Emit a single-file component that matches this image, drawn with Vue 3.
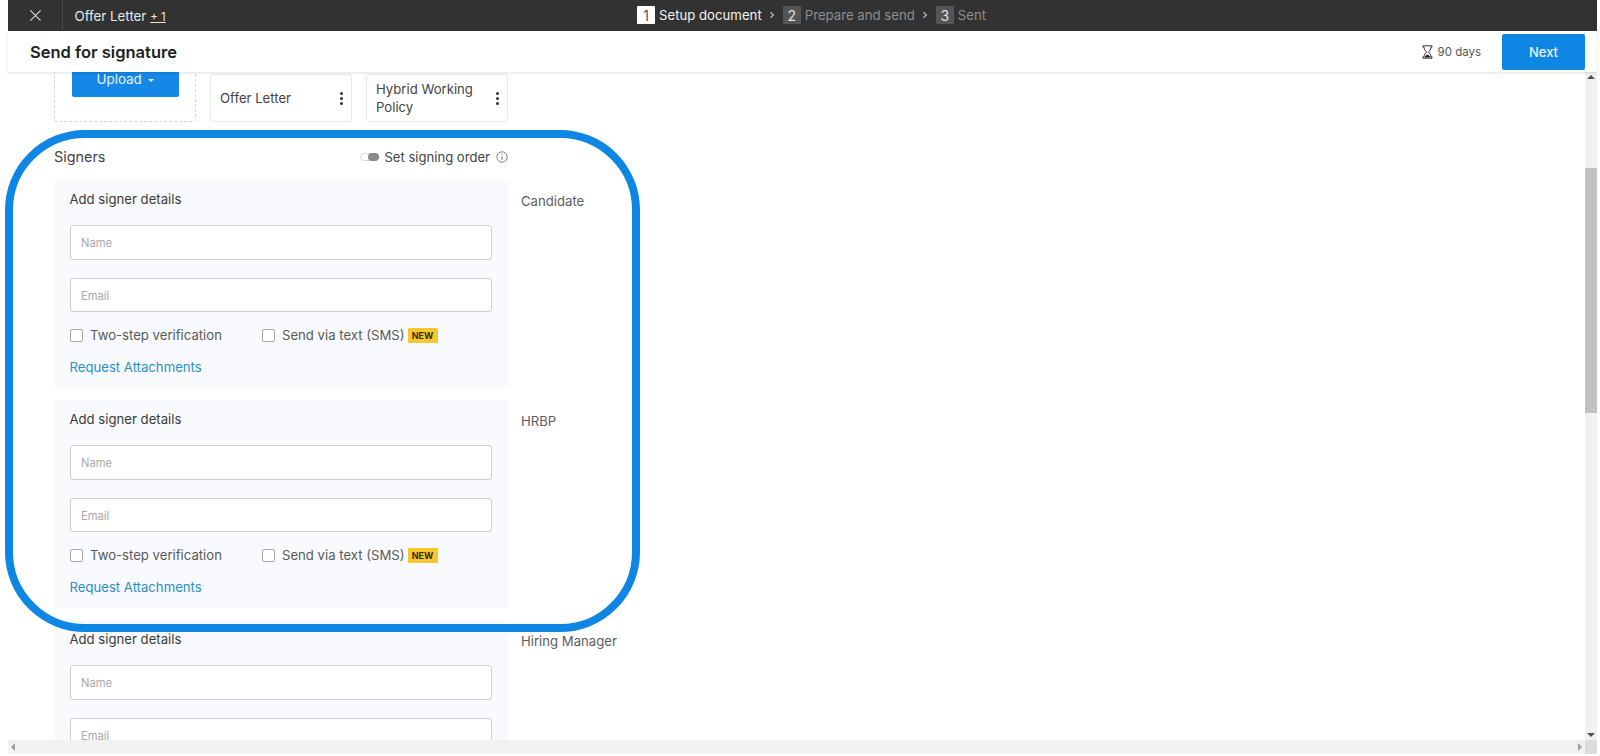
<script setup>
const signers = [{ role: 'Candidate' }, { role: 'HRBP' }, { role: 'Hiring Manager' }]
const steps = [
  { n: 1, label: 'Setup document', active: true },
  { n: 2, label: 'Prepare and send' },
  { n: 3, label: 'Sent' },
]
</script>

<template>
  <div class="page">
    <header class="topbar">
      <button class="close" aria-label="Close">
        <svg width="13" height="13" viewBox="0 0 14 14"><path d="M1.5 1.5l11 11M12.5 1.5l-11 11" stroke="#e0e0e0" stroke-width="1.1" fill="none" /></svg>
      </button>
      <div class="docname">Offer Letter <u class="more">+ 1</u></div>
      <nav class="steps">
        <template v-for="(s, i) in steps" :key="s.n">
          <span class="num" :class="{ on: s.active }">{{ s.n }}</span>
          <span class="lab" :class="{ on: s.active }">{{ s.label }}</span>
          <svg v-if="i < 2" class="chev" width="6" height="8" viewBox="0 0 6 8"><path d="M1.5 1.2L4.4 4 1.5 6.8" stroke="#b5b5b5" stroke-width="1.3" fill="none" /></svg>
        </template>
      </nav>
    </header>

    <div class="titlebar">
      <h1>Send for signature</h1>
      <div class="days">
        <svg width="11" height="14" viewBox="0 0 11 14"><path d="M1 .8h9v1.4H8.9c0 2.6-1.5 3.6-2.5 4.8 1 1.2 2.5 2.2 2.5 4.8H10v1.4H1v-1.4h1.1c0-2.6 1.5-3.6 2.5-4.8-1-1.2-2.5-2.2-2.5-4.8H1z" fill="#fff" stroke="#222" stroke-width=".9" /><path d="M2.6 12.4c.3-1.6 1.6-2.4 2.9-3 1.3.6 2.6 1.4 2.9 3z" fill="#222" /></svg>
        <span>90 days</span>
      </div>
      <button class="next">Next</button>
    </div>

    <div class="body">
      <main class="scroller">
        <div class="files">
          <div class="upload-tile">
            <button class="upload">Upload <i class="caret"></i></button>
          </div>
          <div class="card"><span>Offer Letter</span><i class="dots"></i></div>
          <div class="card"><span>Hybrid Working Policy</span><i class="dots"></i></div>
        </div>

        <div class="signers-head">
          <span class="signers-title">Signers</span>
          <div class="order">
            <i class="toggle"></i>
            <span>Set signing order</span>
            <svg width="12" height="12" viewBox="0 0 12 12"><circle cx="6" cy="6" r="5.2" fill="none" stroke="#777" stroke-width=".9" /><path d="M6 5.2v3.6M6 3v1.2" stroke="#777" stroke-width="1" /></svg>
          </div>
        </div>

        <div class="signers">
          <section v-for="s in signers" :key="s.role" class="signer">
            <div class="panel">
              <div class="panel-title">Add signer details</div>
              <input class="field" placeholder="Name" />
              <input class="field second" placeholder="Email" />
              <div class="checks">
                <label class="chk first"><i class="box"></i>Two-step verification</label>
                <label class="chk"><i class="box"></i>Send via text (SMS)<b class="new">NEW</b></label>
              </div>
              <a class="link">Request Attachments</a>
            </div>
            <div class="role">{{ s.role }}</div>
          </section>
        </div>
      </main>
      <div class="vbar">
        <i class="arr up"></i>
        <div class="thumb"></div>
        <i class="arr down"></i>
      </div>
      <div class="hbar">
        <i class="arr left"></i>
        <i class="arr right"></i>
      </div>
      <div class="corner"></div>
    </div>

    <div class="ring"></div>
  </div>
</template>

<style>
html, body { margin: 0; background: #fff; }
</style>

<style scoped>
* { box-sizing: border-box; }
.page {
  position: relative;
  width: 1600px;
  height: 756px;
  padding: 0 3px 2px 8px;
  display: flex;
  flex-direction: column;
  overflow: hidden;
  font-family: Inter, "Liberation Sans", sans-serif;
  font-size: 13.15px;
  color: #4a4a4a;
  background: #fff;
}
.topbar {
  position: relative;
  flex: 0 0 31px;
  display: flex;
  align-items: center;
  background: #323232;
  color: #e8e8e8;
}
.close {
  width: 55px;
  height: 31px;
  padding: 0;
  border: 0;
  border-right: 1px solid #484848;
  background: none;
  display: flex;
  align-items: center;
  justify-content: center;
}
.docname { margin-left: 11.5px; font-size: 13.3px; }
.more { font-size: 11.5px; }
.steps {
  position: absolute;
  left: 629px;
  top: 6px;
  display: flex;
  align-items: center;
  height: 18px;
}
.num {
  width: 18px;
  height: 18px;
  display: flex;
  align-items: center;
  justify-content: center;
  background: #555;
  color: #e0e0e0;
  font-size: 14px;
  border-radius: 1px;
}
.num.on { background: #fff; color: #555; }
.lab { margin-left: 4px; color: #8e8e8e; font-size: 13.2px; }
.lab.on { color: #f2f2f2; }
.chev { margin: 0 8px 0 7px; }
.titlebar {
  position: relative;
  z-index: 2;
  flex: 0 0 41px;
  display: flex;
  align-items: center;
  padding: 0 12px 0 22px;
  background: #fff;
  box-shadow: 0 1px 3px rgba(0, 0, 0, .12);
}
h1 {
  margin: 0;
  flex: 1;
  font-size: 16.5px;
  font-weight: 600;
  color: #1e1e1e;
}
.days {
  display: flex;
  align-items: center;
  gap: 5px;
  margin-right: 21px;
  font-size: 11.5px;
  color: #555;
}
.next {
  width: 83px;
  height: 36px;
  border: 0;
  border-radius: 2px;
  background: #0e86e4;
  color: #eaf5ff;
  font: 500 13px Inter, sans-serif;
}
.body {
  flex: 1;
  min-height: 0;
  display: grid;
  grid-template-columns: 1fr 12px;
  grid-template-rows: 1fr 14px;
}
.scroller { min-width: 0; min-height: 0; overflow: hidden; padding-left: 46px; }
.files {
  width: 454px;
  height: 62px;
  margin-top: -12px;
  display: grid;
  grid-template-columns: repeat(3, 142px);
  gap: 14px;
}
.upload-tile {
  padding: 0 16.5px;
  border: 1px dashed #d8d8d8;
  border-radius: 4px;
}
.upload {
  width: 100%;
  height: 36px;
  border: 0;
  border-radius: 2px;
  background: #1587e6;
  color: #e4f2ff;
  font: 400 13.4px Inter, sans-serif;
}
.caret {
  display: inline-block;
  margin-left: 2px;
  vertical-align: 2px;
  border: 3px solid transparent;
  border-top-color: #e4f2ff;
  border-bottom: 0;
}
.card {
  align-self: end;
  height: 48px;
  display: flex;
  align-items: center;
  justify-content: space-between;
  padding: 0 8px 0 9px;
  border: 1px solid #e8e8e8;
  border-radius: 3px;
  line-height: 18px;
  color: #444;
}
.card span { max-width: 112px; }
.dots {
  width: 3px;
  height: 3px;
  border-radius: 50%;
  background: #333;
  box-shadow: 0 -5px 0 #333, 0 5px 0 #333;
}
.signers-head {
  width: 454px;
  height: 20px;
  margin-top: 25px;
  display: flex;
  align-items: center;
  justify-content: space-between;
}
.signers-title { font-size: 14.4px; color: #444; margin-bottom: 2px; }
.order { display: flex; align-items: center; gap: 5px; color: #444; font-size: 13.1px; }
.order svg { margin-left: 1px; }
.toggle {
  position: relative;
  width: 19px;
  height: 8px;
  border: 1px solid #d5d5d5;
  border-radius: 4px;
  background: #fff;
}
.toggle::after {
  content: "";
  position: absolute;
  right: -1px;
  top: -1px;
  width: 11px;
  height: 8px;
  border-radius: 4px;
  background: #8a8a8a;
}
.signers {
  margin-top: 13px;
  display: flex;
  flex-direction: column;
  gap: 12px;
}
.signer { display: flex; gap: 13px; }
.panel {
  width: 454px;
  height: 208px;
  padding: 9px 16px 11px;
  background: #f8fafd;
  display: flex;
  flex-direction: column;
  align-items: flex-start;
}
.panel-title { line-height: 20px; color: #3a3a3a; margin-left: -.5px; }
.field {
  width: 100%;
  height: 35px;
  margin-top: 16px;
  padding: 2px 10px 0;
  border: 1px solid #cfcfcf;
  border-radius: 3px;
  background: #fff;
  font: 11.2px Inter, sans-serif;
}
.field::placeholder { color: #a8a8a8; }
.field.second { margin-top: 18px; }
.checks {
  display: flex;
  margin-top: 13px;
  height: 20px;
  align-items: center;
}
.chk { display: flex; align-items: center; color: #5a5a5a; }
.chk.first { width: 192px; }
.box {
  width: 13px;
  height: 13px;
  margin-right: 7px;
  border: 1px solid #a6a6a6;
  border-radius: 2px;
  background: #fff;
}
.new {
  margin-left: 3px;
  width: 30px;
  height: 15px;
  background: #f8c62f;
  color: #3a3000;
  font-size: 9px;
  font-weight: 700;
  line-height: 16px;
  text-align: center;
  border-radius: 1px;
}
.link { margin: 12px 0 0 -.5px; line-height: 20px; color: #2b8fc9; }
.role { padding-top: 11px; line-height: 20px; color: #5c5c5c; }
.vbar {
  position: relative;
  background: #f1f1f1;
  padding-top: 96px;
}
.thumb { height: 245px; background: #c1c1c1; }
.hbar { position: relative; background: #f1f1f1; }
.corner { background: #dcdcdc; }
.arr { position: absolute; width: 0; height: 0; border: 4px solid transparent; }
.arr.up { left: 2px; top: 3px; border-top: 0; border-bottom-color: #505050; }
.arr.down { left: 2px; bottom: 3px; border-bottom: 0; border-top-color: #505050; }
.arr.left { left: 3px; top: 3px; border-left: 0; border-right-color: #a0a0a0; }
.arr.right { right: 3px; top: 3px; border-right: 0; border-left-color: #a0a0a0; }
.ring {
  position: absolute;
  left: 5px;
  top: 130px;
  width: 635px;
  height: 502px;
  border: 8px solid #0e86e4;
  border-radius: 80px;
  pointer-events: none;
}
</style>
